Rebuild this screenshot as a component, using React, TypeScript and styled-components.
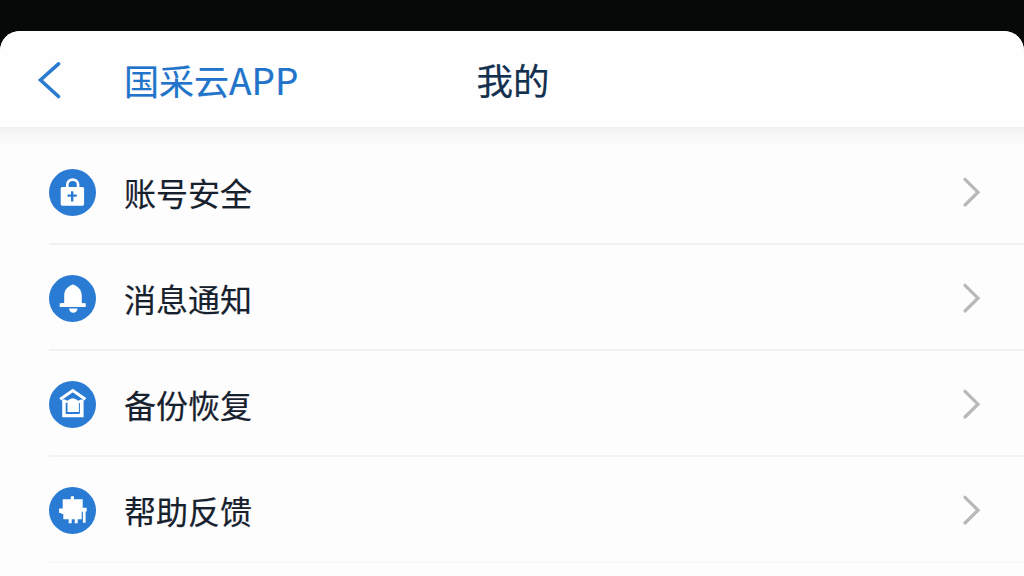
import type { ReactNode } from 'react';
import styled, { createGlobalStyle } from 'styled-components';

const GlobalStyle = createGlobalStyle`
  * {
    box-sizing: border-box;
  }

  body {
    margin: 0;
    overflow: hidden;
    background: #070909;
    font-family: 'Noto Sans CJK SC', sans-serif;
  }
`;

const Screen = styled.div`
  height: 576px;
  padding-top: 31px;
  overflow: hidden;
  background: #070909;
`;

const Sheet = styled.main`
  height: 545px;
  overflow: hidden;
  border-radius: 20px 20px 0 0;
  background: #fdfdfd;
`;

const Header = styled.header`
  display: grid;
  grid-template-columns: 124px 1fr auto 1fr 122px;
  align-items: center;
  height: 96px;
  background: #fefefe;
`;

const BackButton = styled.button`
  display: flex;
  width: 24px;
  margin: 2px 0 0 37px;
  padding: 0;
  border: 0;
  background: none;
`;

const AppName = styled.span`
  display: flex;
  align-items: baseline;
  color: #2274ca;
  font-size: 35px;
  line-height: 52px;
  white-space: nowrap;
  -webkit-text-stroke: 0.2px currentColor;
`;

const Latin = styled.span`
  font-size: 37px;
`;

const Title = styled.h1`
  margin: 0;
  padding-top: 1px;
  color: #14304f;
  font-size: 36.5px;
  font-weight: 400;
  line-height: 52px;
  -webkit-text-stroke: 0.2px currentColor;
`;

const List = styled.ul`
  margin: 0;
  padding: 12px 0 0;
  list-style: none;
  background: linear-gradient(#f1f1f2, #f7f7f7 8px, #fdfdfd 20px);
`;

const Row = styled.li`
  display: flex;
  align-items: center;
  height: 106px;
  margin-left: 49px;
  padding: 2px 42px 0 0;
  border-bottom: 2px solid #f2f2f2;

  &:last-child {
    border-bottom-color: #f8f8f8;
  }
`;

const Badge = styled.svg`
  width: 47px;
  height: 47px;
  flex: none;
`;

const Label = styled.span`
  flex: 1;
  margin-left: 28px;
  color: #17212e;
  font-size: 32px;
  line-height: 48px;
  -webkit-text-stroke: 0.2px currentColor;
`;

const Arrow = styled.svg`
  width: 20px;
  height: 32px;
`;

const LockIcon = () => (
  <>
    <path d="M18.3 20v-4.4a5.4 5 0 0 1 10.8 0V20" fill="none" stroke="#fff" strokeWidth="2.6" />
    <rect x="11.7" y="18" width="23.4" height="18.7" rx="1.6" fill="#fff" />
    <path d="M23.2 22.3v10.2M18.6 26.6h9.2" stroke="#2a7bd3" strokeWidth="2.4" />
  </>
);

const BellIcon = () => (
  <path
    fill="#fff"
    d="M15.2 28v-7.2c0-4.6 2.2-8 5.5-9.8q3.2-3.2 6.4 0c3.3 1.8 5.7 5.2 5.7 9.8V28l3.9 .2v3.9h-26v-3.9zM20 33.5h8.6c-.4 2.8-2 4.2-4.3 4.2s-3.9-1.4-4.3-4.2z"
  />
);

const HouseIcon = () => (
  <>
    <path d="M11.2 18.3 23.8 9.6l12.6 8.7" fill="none" stroke="#fff" strokeWidth="3" />
    <path
      fill="#fff"
      d="M13.2 18.6h2.6l2.6 1.2q5.4-5 10.8 0l2.8-1.2h2.6v17.6H13.2z"
    />
    <path d="M17.6 21.8v10.2h13" fill="none" stroke="#2a7bd3" strokeWidth="1.8" />
    <path d="M30.4 22v10" stroke="#2a7bd3" strokeWidth="1" />
  </>
);

const PluginIcon = () => (
  <path
    fill="#fff"
    d="M13.7 12.3h8.1v-2.6q1.7-1.4 3.2 0v2.6h8.7v8.4h4v3.8h-1.1v11.2h-2.7V24.7h-1.2v7.6h-4v4h-3v-4h-3v4h-3v-4h-5.4v-5.3h-2v-1h-2.2v-4.5h3.6z"
  />
);

const Chevron = () => (
  <Arrow viewBox="0 0 20 32" fill="none">
    <path d="m3 3.3 13 12.9L3 29" stroke="#b8b8b8" strokeWidth="3.2" strokeLinecap="round" />
  </Arrow>
);

const items: { label: string; icon: ReactNode }[] = [
  { label: '账号安全', icon: <LockIcon /> },
  { label: '消息通知', icon: <BellIcon /> },
  { label: '备份恢复', icon: <HouseIcon /> },
  { label: '帮助反馈', icon: <PluginIcon /> },
];

const App = () => (
  <>
    <GlobalStyle />
    <Screen>
      <Sheet>
        <Header>
          <BackButton aria-label="返回">
            <svg width="24" height="38" viewBox="0 0 24 38" fill="none">
              <path d="M21.5 2.8 3.5 19l18 16.5" stroke="#2a7bcf" strokeWidth="3.6" strokeLinecap="round" />
            </svg>
          </BackButton>
          <AppName>
            国采云<Latin>APP</Latin>
          </AppName>
          <Title>我的</Title>
        </Header>
        <List>
          {items.map(({ label, icon }) => (
            <Row key={label}>
              <Badge viewBox="0 0 47 47">
                <circle cx="23.5" cy="23.5" r="23.5" fill="#2a7bd3" />
                {icon}
              </Badge>
              <Label>{label}</Label>
              <Chevron />
            </Row>
          ))}
        </List>
      </Sheet>
    </Screen>
  </>
);

export default App;
